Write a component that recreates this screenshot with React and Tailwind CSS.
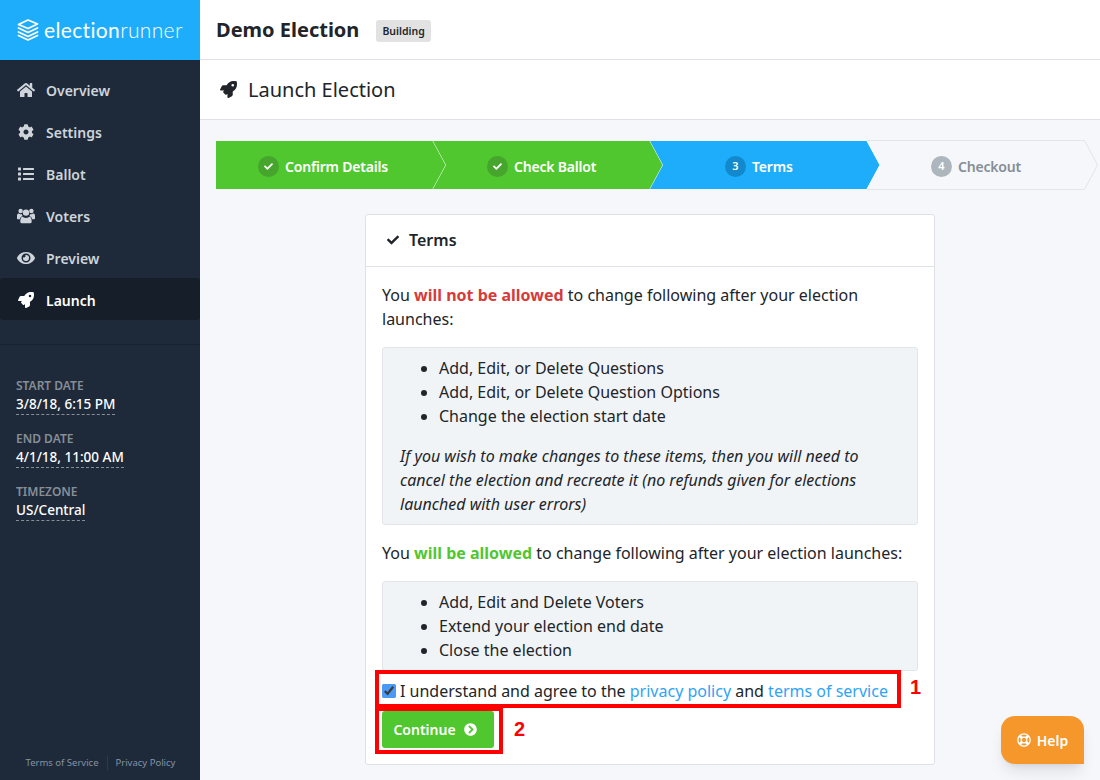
import React from "react";
import {
  FaHome,
  FaCog,
  FaList,
  FaEye,
  FaRocket,
  FaCheck,
  FaChevronCircleRight,
  FaRegLifeRing,
} from "react-icons/fa";

// font awesome 4 style group icon, the package one is too flat
const UsersIcon = ({ className }) => (
  <svg className={className} viewBox="0 0 18 16" fill="currentColor" width="18" height="16">
    <circle cx="9" cy="4.6" r="3.2" />
    <path d="M4.6 15.2c-.9 0-1.3-.6-1.3-1.4 0-3 .6-5 2.4-5 .4 0 1.6 1.3 3.3 1.3s2.9-1.3 3.3-1.3c1.8 0 2.4 2 2.4 5 0 .8-.4 1.4-1.3 1.4z" />
    <circle cx="3.6" cy="3" r="2.2" />
    <circle cx="14.4" cy="3" r="2.2" />
    <path d="M0 8.6c0-1.7.4-3 1.6-3 .3 0 1 .7 2 .7.5 0 1-.1 1.3-.3 0 .8.3 1.6.8 2.1-1.3.3-2.6 1.5-2.9 3.2H1c-.6 0-1-.4-1-1z" />
    <path d="M18 8.6c0-1.7-.4-3-1.6-3-.3 0-1 .7-2 .7-.5 0-1-.1-1.3-.3 0 .8-.3 1.6-.8 2.1 1.3.3 2.6 1.5 2.9 3.2H17c.6 0 1-.4 1-1z" />
  </svg>
);

const navItems = [
  { label: "Overview", icon: FaHome },
  { label: "Settings", icon: FaCog },
  { label: "Ballot", icon: FaList },
  { label: "Voters", icon: UsersIcon },
  { label: "Preview", icon: FaEye },
  { label: "Launch", icon: FaRocket, active: true },
];

const dates = [
  { label: "START DATE", value: "3/8/18, 6:15 PM" },
  { label: "END DATE", value: "4/1/18, 11:00 AM" },
  { label: "TIMEZONE", value: "US/Central" },
];

const steps = [
  { label: "Confirm Details", done: true, fill: "#50c72f", badge: "bg-[#46a52c]", text: "text-white", offset: "pl-[42px]" },
  { label: "Check Ballot", done: true, fill: "#50c72f", badge: "bg-[#46a52c]", text: "text-white", offset: "pl-[54px]" },
  { label: "Terms", num: 3, fill: "#1eadfa", badge: "bg-[#1289cc]", text: "text-white", offset: "pl-[75px]" },
  { label: "Checkout", num: 4, fill: "#f5f7fa", stroke: "#e2e5e9", badge: "bg-[#adb5bd]", text: "text-[#868e96]", offset: "pl-[64px]" },
];

const Logo = () => (
  <svg width="22" height="22" viewBox="0 0 22 22" fill="none" stroke="white" strokeWidth="1.8" strokeLinejoin="round" strokeLinecap="round">
    <path d="M11 1 L20.5 5 L11 9.5 L1.5 5.5 Z" />
    <path d="M1.5 9 L11 13.5 L20.5 9" />
    <path d="M1.5 13 L11 17.5 L20.5 13" />
    <path d="M1.5 16.5 L11 21 L20.5 16.5" />
  </svg>
);

const Step = ({ step, first }) => (
  <div className={`relative flex h-[50px] w-[217px] shrink-0 items-center pt-[2px] ${step.offset} ${step.text}`}>
    <svg className="absolute left-0 top-0" width="232" height="50" viewBox="0 0 232 50" fill="none">
      <path
        d={first ? "M0 1 H217 L230 25 L217 49 H0 Z" : "M0 1 H217 L230 25 L217 49 H0 L13 25 Z"}
        fill={step.fill}
      />
      {step.stroke ? (
        <path d="M0 .5 H217.5 L230.5 25 L217.5 49.5 H0" stroke={step.stroke} />
      ) : (
        <path d="M217 1 L230 25 L217 49" stroke="white" />
      )}
    </svg>
    <span className={`relative mr-[6px] flex h-[21px] w-[21px] items-center justify-center rounded-full text-[11px] font-semibold text-white ${step.badge}`}>
      {step.done ? <FaCheck className="text-[9px]" /> : step.num}
    </span>
    <span className="relative text-[14px] font-semibold tracking-[-0.2px]">{step.label}</span>
  </div>
);

const App = () => {
  return (
    <div className="relative flex h-[780px] w-[1100px] overflow-hidden bg-[#f5f7fa] font-['Noto_Sans',sans-serif] text-[#212529]">
      <aside className="flex w-[200px] shrink-0 flex-col bg-[#1e2a3a]">
        <div className="flex h-[60px] items-center gap-[5px] bg-[#1eadfa] pl-[17px]">
          <Logo />
          <span className="font-['Lato',sans-serif] text-[21px] tracking-[0.35px] text-white">
            <span className="font-normal">election</span>
            <span className="font-light">runner</span>
          </span>
        </div>

        <nav className="border-b border-[#18222f] pb-[24px] pt-[8px]">
          {navItems.map((item) => (
            <div
              key={item.label}
              className={`flex h-[42px] items-center pl-[17px] pt-[2px] text-[14px] font-semibold ${
                item.active ? "rounded-[3px] bg-[#161e2a] text-white" : "text-[#ced4da]"
              }`}
            >
              <item.icon className="w-[18px] text-[16px]" />
              <span className="ml-[11px]">{item.label}</span>
            </div>
          ))}
        </nav>

        <div className="flex flex-col gap-[16px] pl-[16px] pt-[33px]">
          {dates.map((d) => (
            <div key={d.label}>
              <div className="text-[12px] font-semibold leading-[16px] text-[#868e96]">{d.label}</div>
              <div className="w-fit border-b border-dashed border-[#868e96] pt-[1px] text-[13.5px] font-medium leading-[19px] text-white">{d.value}</div>
            </div>
          ))}
        </div>

        <div className="mt-auto flex items-center justify-center pb-[10px] pl-[1px] text-[9.5px] text-[#8592a3]">
          <span className="pr-[8px]">Terms of Service</span>
          <span className="border-l border-[#2c3a4c] pl-[8px]">Privacy Policy</span>
        </div>
      </aside>

      <main className="flex min-w-0 flex-1 flex-col">
        <header className="flex h-[60px] shrink-0 items-center border-b border-[#dee2e6] bg-white pl-[16px]">
          <h1 className="text-[20px] font-bold">Demo Election</h1>
          <span className="ml-[17px] mt-[2px] rounded-[3px] bg-[#e2e2e2] px-[6px] py-[2px] text-[10.5px] font-semibold leading-[18px]">Building</span>
        </header>

        <div className="flex h-[60px] shrink-0 items-center border-b border-[#dee2e6] bg-white pl-[20px]">
          <FaRocket className="text-[17px]" />
          <h2 className="ml-[11px] text-[20px] leading-[24px]">Launch Election</h2>
        </div>

        <div className="flex pl-[16px] pt-[20px]">
          {steps.map((step, i) => (
            <Step key={step.label} step={step} first={i === 0} />
          ))}
        </div>

        <section className="relative ml-[165px] mt-[24px] w-[570px] rounded-[3px] border border-[#dee2e6] bg-white">
          <div className="flex h-[52px] items-center border-b border-[#dee2e6] pb-[2px] pl-[21px] text-[16px] font-semibold">
            <FaCheck className="mr-[10px] text-[12px]" />
            Terms
          </div>
          <div className="px-[16px] pb-[16px] pt-[16px] text-[16px] leading-[24px]">
            <p>
              You <b className="font-bold text-[#d63a3a]">will not be allowed</b> to change following after your election launches:
            </p>
            <div className="mt-[16px] rounded-[3px] border border-[#e2e6ea] bg-[#f1f4f7] px-[17px] pb-[8px] pt-[8px]">
              <ul className="list-disc pl-[39px]">
                <li>Add, Edit, or Delete Questions</li>
                <li>Add, Edit, or Delete Question Options</li>
                <li>Change the election start date</li>
              </ul>
              <p className="mt-[16px] italic">
                If you wish to make changes to these items, then you will need to cancel the election and recreate it (no refunds given for elections launched with user errors)
              </p>
            </div>
            <p className="mt-[16px]">
              You <b className="font-bold text-[#50c72f]">will be allowed</b> to change following after your election launches:
            </p>
            <div className="mt-[16px] rounded-[3px] border border-[#e2e6ea] bg-[#f1f4f7] px-[17px] pb-[8px] pt-[8px]">
              <ul className="list-disc pl-[39px]">
                <li>Add, Edit and Delete Voters</li>
                <li>Extend your election end date</li>
                <li>Close the election</li>
              </ul>
            </div>
            <label className="mt-[8px] flex items-center">
              <input type="checkbox" defaultChecked className="m-0 h-[14px] w-[14px] accent-[#4a9af5]" />
              <span className="ml-[4px]">
                I understand and agree to the <a className="text-[#2fa4f5]">privacy policy</a> and <a className="text-[#2fa4f5]">terms of service</a>
              </span>
            </label>
            <button className="mt-[8px] flex h-[37px] w-[112px] items-center justify-center gap-[8px] rounded-[3px] bg-[#50c72f] pr-[6px] text-[14px] font-semibold text-white">
              Continue
              <FaChevronCircleRight className="text-[13px]" />
            </button>
          </div>

          {/* red annotation boxes */}
          <div className="absolute left-[9px] top-[455px] h-[38px] w-[526px] border-[4px] border-[#ff0000]" />
          <div className="absolute left-[9px] top-[492px] h-[47px] w-[128px] border-[4px] border-[#ff0000]" />
          <span className="absolute left-[544px] top-[460px] font-['Liberation_Sans',sans-serif] text-[20px] font-bold leading-[24px] text-[#ff0000]">1</span>
          <span className="absolute left-[148px] top-[502px] font-['Liberation_Sans',sans-serif] text-[20px] font-bold leading-[24px] text-[#ff0000]">2</span>
        </section>
      </main>

      <button className="absolute bottom-[16px] right-[16px] flex h-[48px] w-[83px] items-center justify-center gap-[6px] rounded-l-[14px] rounded-tr-[14px] bg-[#f5972a] text-[14px] font-semibold text-white shadow-lg">
        <FaRegLifeRing className="text-[14px]" />
        Help
      </button>
    </div>
  );
};

export default App;
